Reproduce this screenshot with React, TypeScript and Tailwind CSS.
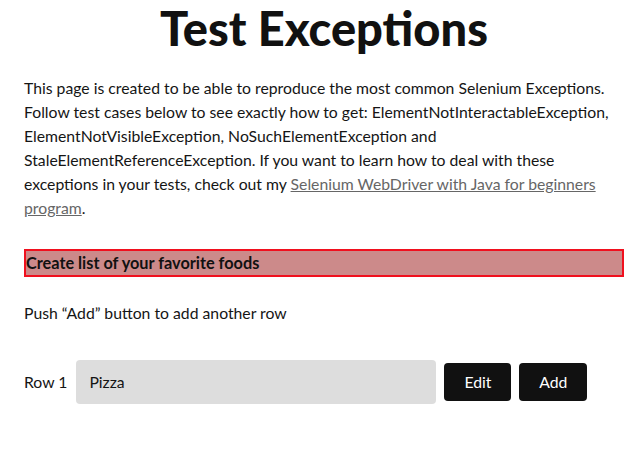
export default function App() {
  return (
    <div className="min-h-[464px] bg-white text-[#151515] font-['Lato',sans-serif]">
      <div className="ml-6 w-[600px]">
        <h2 className="pt-[2px] text-center text-[47px] leading-[52px] font-black text-[#111]">Test Exceptions</h2>
        <p className="mt-[22px] text-[15.75px] leading-6">
          This page is created to be able to reproduce the most common Selenium Exceptions. Follow test cases below to see exactly how to get: ElementNotInteractableException, ElementNotVisibleException, NoSuchElementException and StaleElementReferenceException. If you want to learn how to deal with these exceptions in your tests, check out my{" "}
          <a className="text-[#666] underline" href="#">Selenium WebDriver with Java for beginners program</a>.
        </p>
        <div className="mt-[29px] h-[28px] border-2 border-[#f0101e] bg-[#cc8a8a] text-[16.3px] font-bold leading-6 text-[#111]">
          Create list of your favorite foods
        </div>
        <p className="mt-[24px] text-[15.75px] leading-6">Push “Add” button to add another row</p>
        <div className="mt-[35px] flex items-center">
          <span className="text-[15.75px] leading-6">Row 1</span>
          <div className="ml-[9px] flex h-[44px] w-[360px] items-center rounded-[4px] bg-[#dddddd] px-[13px] text-[15.75px]">Pizza</div>
          <button className="ml-[8px] h-[38px] w-[67px] rounded-[4px] bg-[#111] text-[15.75px] text-white">Edit</button>
          <button className="ml-[8px] h-[38px] w-[68px] rounded-[4px] bg-[#111] text-[15.75px] text-white">Add</button>
        </div>
      </div>
    </div>
  );
}
